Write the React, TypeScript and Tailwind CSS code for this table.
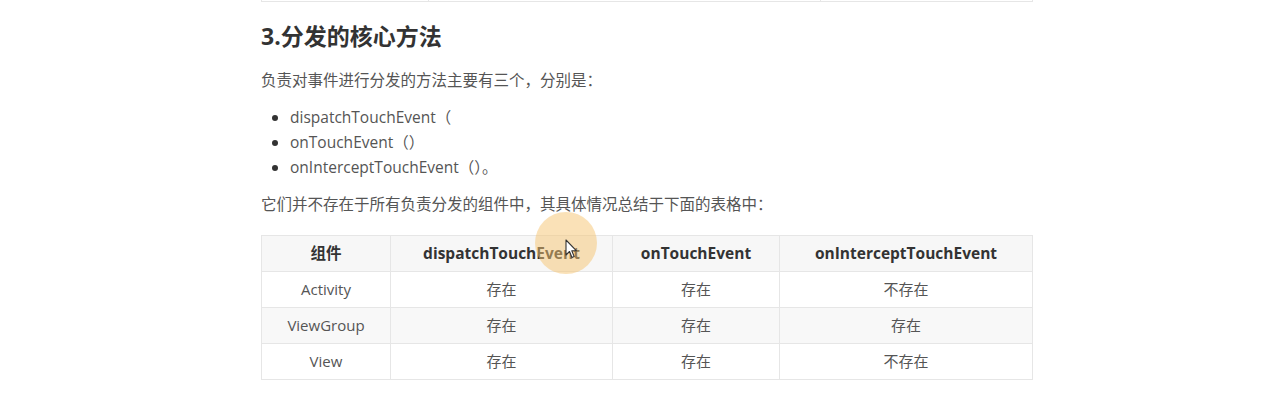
import React from "react";

const rows = [
  { name: "Activity", a: "存在", b: "存在", c: "不存在", alt: false },
  { name: "ViewGroup", a: "存在", b: "存在", c: "存在", alt: true },
  { name: "View", a: "存在", b: "存在", c: "不存在", alt: false },
];

const font = { fontFamily: '"Open Sans", "Noto Sans CJK SC", sans-serif' };

const App = () => {
  return (
    <div className="relative w-[1280px] h-[397px] bg-white overflow-hidden" style={font}>
      <div className="ml-[261px] w-[772px]">
        {/* tail of the previous table */}
        <div className="flex h-[2px] border-x border-b border-[#e6e6e6]">
          <div className="w-[167px] border-r border-[#e6e6e6]" />
          <div className="w-[392px] border-r border-[#e6e6e6]" />
          <div className="flex-1" />
        </div>

        <h2 className="mt-[16px] text-[23px] leading-[36px] font-bold text-[#333]">3.分发的核心方法</h2>

        <p className="mt-[14px] text-[15.5px] leading-[25px] text-[#555]">负责对事件进行分发的方法主要有三个，分别是：</p>

        <ul className="mt-[12px] pl-[29px] list-disc text-[15.5px] leading-[25px] text-[#555] marker:text-[#333]">
          <li>dispatchTouchEvent（</li>
          <li>onTouchEvent（）</li>
          <li>onInterceptTouchEvent（）。</li>
        </ul>

        <p className="mt-[12px] text-[15.5px] leading-[25px] text-[#555]">
          它们并不存在于所有负责分发的组件中，其具体情况总结于下面的表格中：
        </p>

        <table className="mt-[18px] w-[772px] border-collapse text-[15px] text-center">
          <thead>
            <tr className="bg-[#f7f7f7] h-[36px]">
              <th className="w-[129px] border border-[#e6e6e6] font-bold text-[15.5px] text-[#333]">组件</th>
              <th className="w-[222px] border border-[#e6e6e6] font-bold text-[15.5px] text-[#333]">dispatchTouchEvent</th>
              <th className="w-[167px] border border-[#e6e6e6] font-bold text-[15.5px] text-[#333]">onTouchEvent</th>
              <th className="border border-[#e6e6e6] font-bold text-[15.5px] text-[#333]">onInterceptTouchEvent</th>
            </tr>
          </thead>
          <tbody>
            {rows.map((r) => (
              <tr key={r.name} className={r.alt ? "h-[36px] bg-[#f8f8f8]" : "h-[36px] bg-white"}>
                <td className="border border-[#e6e6e6] text-[#555]">{r.name}</td>
                <td className="border border-[#e6e6e6] text-[#555]">{r.a}</td>
                <td className="border border-[#e6e6e6] text-[#555]">{r.b}</td>
                <td className="border border-[#e6e6e6] text-[#555]">{r.c}</td>
              </tr>
            ))}
          </tbody>
        </table>
      </div>

      {/* cursor highlight */}
      <div className="absolute left-[535px] top-[212px] w-[62px] h-[62px] rounded-full bg-[#f6c46f]/50 pointer-events-none" />
      <svg className="absolute left-[565px] top-[239px]" width="14" height="20" viewBox="0 0 14 20">
        <path d="M1 1 L1 16 L4.5 12.5 L7 18.5 L9.2 17.6 L6.8 11.8 L11.5 11.8 Z" fill="#fff" stroke="#333" strokeWidth="1.1" strokeLinejoin="round" />
      </svg>
    </div>
  );
};

export default App;
